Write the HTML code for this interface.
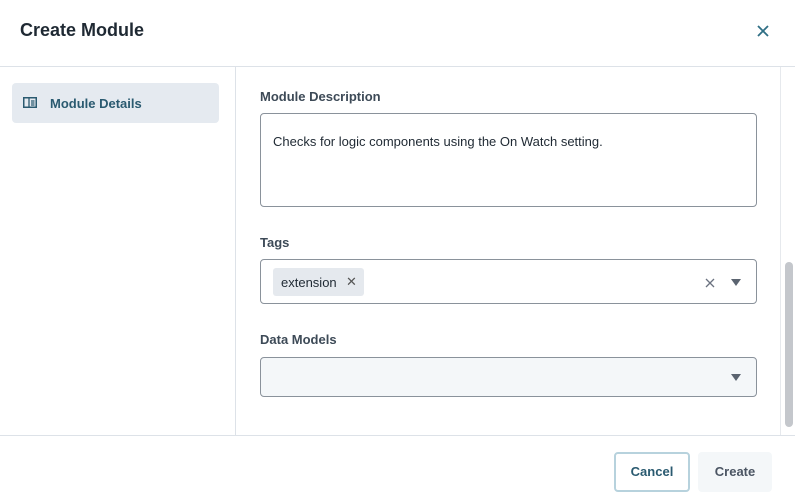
<!DOCTYPE html>
<html><head><style>
*{box-sizing:border-box;margin:0;padding:0}
body{width:795px;height:502px;background:#fff;font-family:"Liberation Sans",sans-serif;position:relative;overflow:hidden;color:#1f2a37}
.abs{position:absolute}
</style></head><body>
<div class="abs" style="left:20px;top:20px;font-size:18px;font-weight:bold;color:#1f2933">Create Module</div>
<svg class="abs" style="left:756px;top:24px" width="14" height="14" viewBox="0 0 14 14"><path d="M2 2L12 12M12 2L2 12" stroke="#2f6f85" stroke-width="1.8"/></svg>
<div class="abs" style="left:0;top:66px;width:795px;height:1px;background:#dde2e8"></div>
<div class="abs" style="left:12px;top:83px;width:207px;height:40px;background:#e5eaf0;border-radius:4px"></div>
<svg class="abs" style="left:23px;top:97px" width="14" height="12" viewBox="0 0 14 12"><rect x="0.75" y="0.75" width="12.5" height="9.5" fill="none" stroke="#2a5a70" stroke-width="1.5"/><path d="M6 1v9M8 4h3.5M8 6h3.5M8 8h3.5" stroke="#2a5a70" stroke-width="1.3"/></svg>
<div class="abs" style="left:50px;top:96px;font-size:13px;font-weight:bold;color:#2a5a70">Module Details</div>
<div class="abs" style="left:235px;top:67px;width:1px;height:368px;background:#dde2e8"></div>
<div class="abs" style="left:780px;top:67px;width:1px;height:368px;background:#e6e9ed"></div>
<div class="abs" style="left:785px;top:262px;width:8px;height:165px;background:#c4c7cc;border-radius:4px"></div>
<div class="abs" style="left:260px;top:89px;font-size:13px;font-weight:bold;color:#3d4a57">Module Description</div>
<div class="abs" style="left:260px;top:113px;width:497px;height:94px;border:1px solid #8a929b;border-radius:4px"></div>
<div class="abs" style="left:273px;top:134px;font-size:13px;color:#1f2933">Checks for logic components using the On Watch setting.</div>
<div class="abs" style="left:260px;top:235px;font-size:13px;font-weight:bold;color:#3d4a57">Tags</div>
<div class="abs" style="left:260px;top:259px;width:497px;height:45px;border:1px solid #8a929b;border-radius:4px"></div>
<div class="abs" style="left:273px;top:268px;width:91px;height:28px;background:#e5e9ee;border-radius:3px"></div>
<div class="abs" style="left:281px;top:275px;font-size:13px;color:#1f2933">extension</div>
<div class="abs" style="left:346px;top:274px;font-size:13px;color:#555">✕</div>
<svg class="abs" style="left:705px;top:278px" width="10" height="10" viewBox="0 0 10 10"><path d="M1 1L9 9M9 1L1 9" stroke="#6b7280" stroke-width="1.3"/></svg>
<svg class="abs" style="left:731px;top:279px" width="10" height="7"><path d="M0 0H10L5 7Z" fill="#5b6470"/></svg>
<div class="abs" style="left:260px;top:332px;font-size:13px;font-weight:bold;color:#3d4a57">Data Models</div>
<div class="abs" style="left:260px;top:357px;width:497px;height:40px;border:1px solid #8a929b;border-radius:4px;background:#f4f7f9"></div>
<svg class="abs" style="left:731px;top:374px" width="10" height="7"><path d="M0 0H10L5 7Z" fill="#5b6470"/></svg>
<div class="abs" style="left:0;top:435px;width:795px;height:1px;background:#dde2e8"></div>
<div class="abs" style="left:614px;top:452px;width:76px;height:40px;border:2px solid #b7d2dd;border-radius:4px;font-size:13px;font-weight:bold;color:#2a5a70;text-align:center;line-height:36px">Cancel</div>
<div class="abs" style="left:698px;top:452px;width:74px;height:40px;background:#f4f7f9;border-radius:4px;font-size:13px;font-weight:bold;color:#4b5563;text-align:center;line-height:40px">Create</div>
</body></html>
